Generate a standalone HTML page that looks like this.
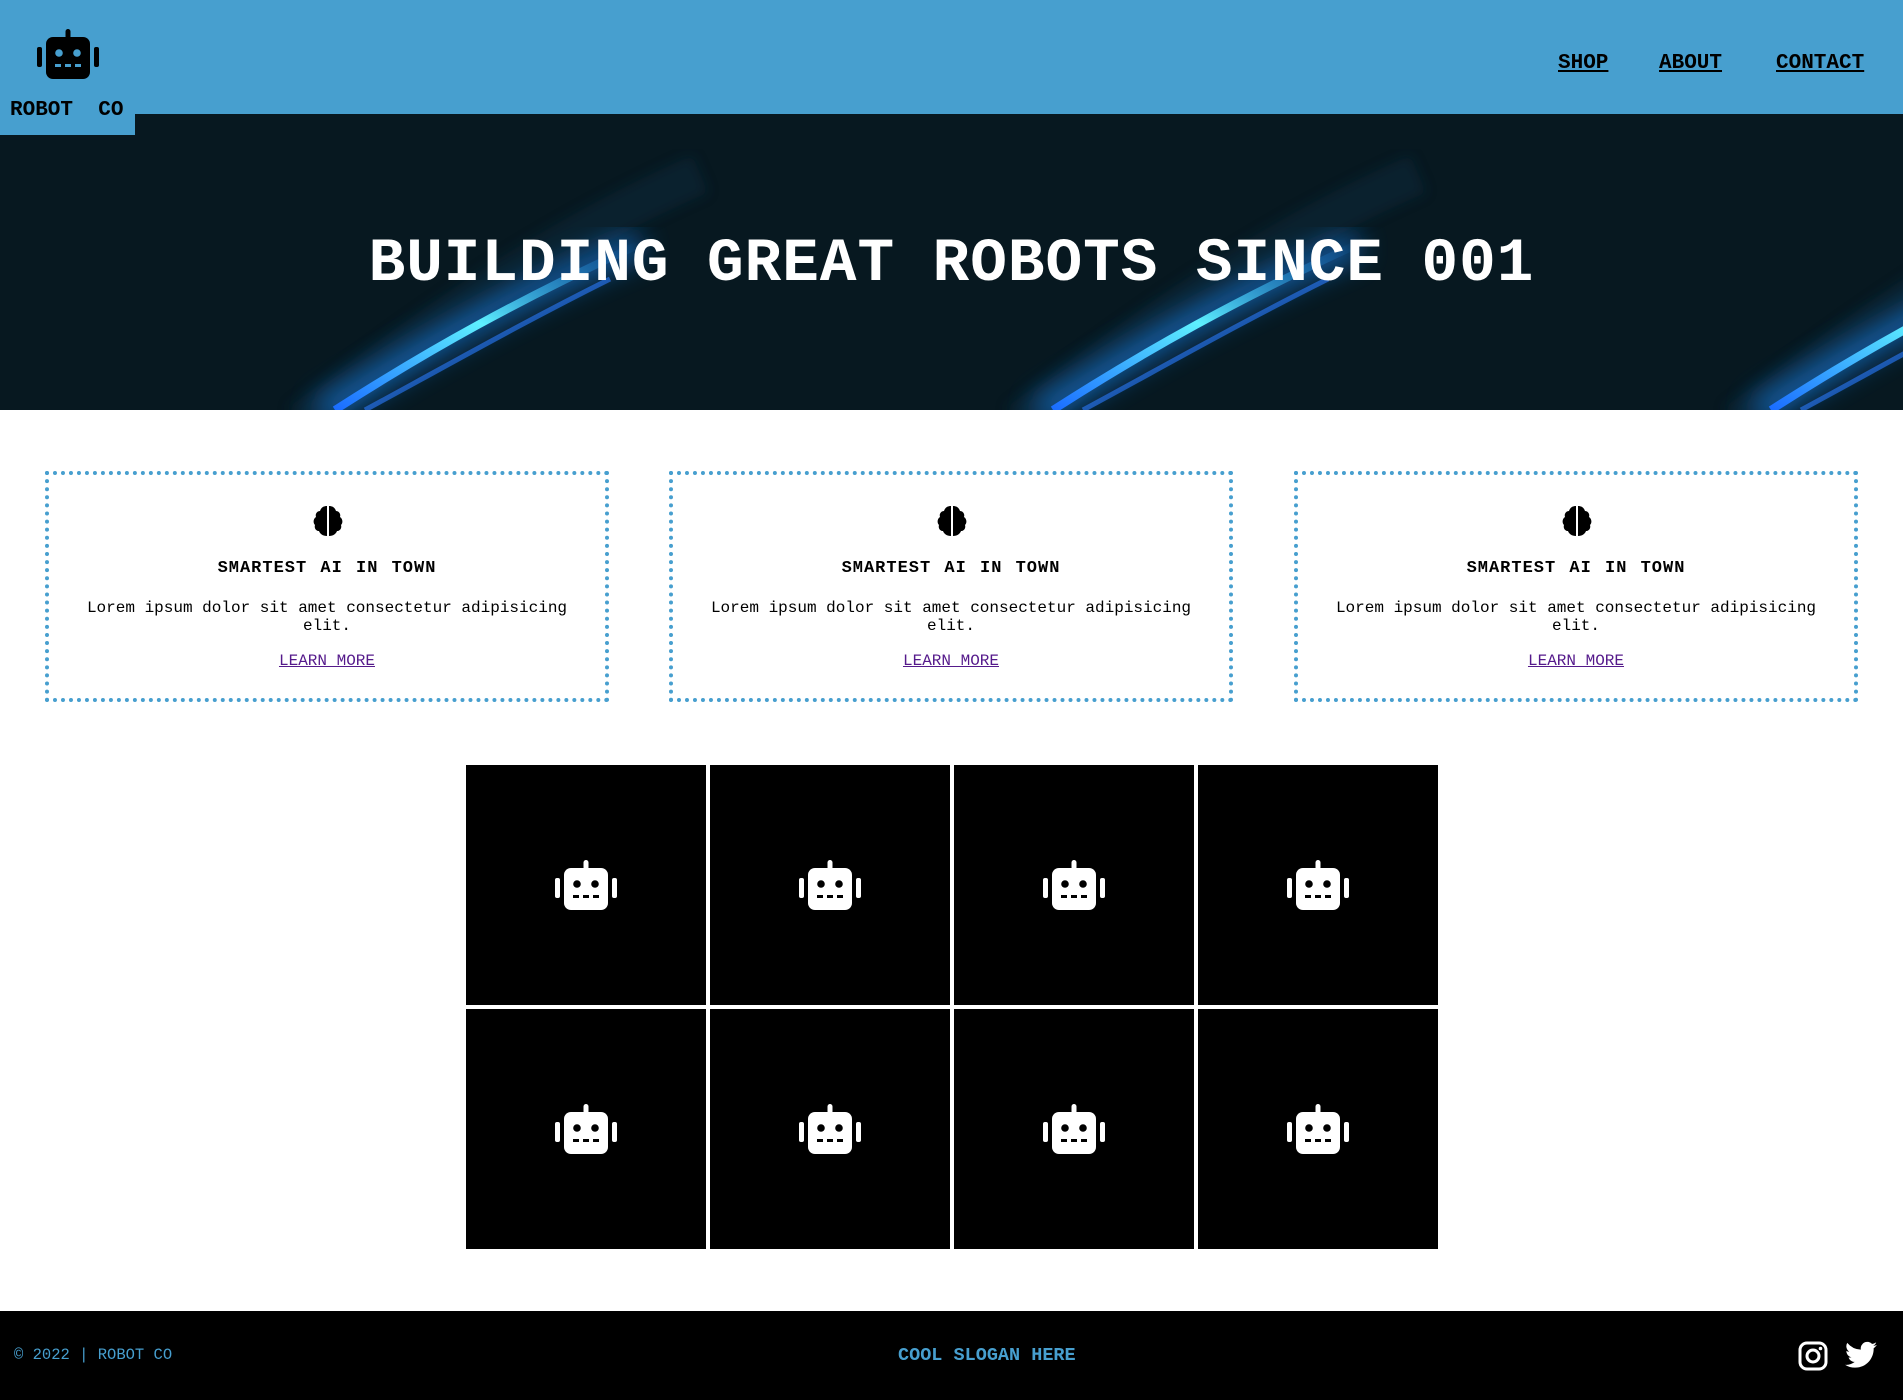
<!DOCTYPE html>
<html><head><meta charset="utf-8"><style>
*{margin:0;padding:0;box-sizing:border-box}
body{width:1903px;height:1400px;position:relative;background:#fff;font-family:"Liberation Mono","Courier New",monospace;overflow:hidden}
header{position:absolute;left:0;top:0;width:1903px;height:114px;background:#479fcf}
.logo{position:absolute;left:0;top:0;width:135px;height:135px;background:#479fcf;z-index:3}
.logo svg{position:absolute;left:37px;top:29px}
.logo span{position:absolute;left:10px;top:99px;font-weight:bold;font-size:21px;color:#000;white-space:pre}
nav a{position:absolute;top:52px;font-weight:bold;font-size:21px;color:#000;text-decoration:underline}
.hero{position:absolute;left:0;top:114px;width:1903px;height:296px;background:#071820;overflow:hidden}
.hero h1{position:absolute;left:0;width:1903px;top:116px;text-align:center;color:#fff;font-size:61px;font-weight:bold;line-height:70px;white-space:pre;letter-spacing:1px}
.card{position:absolute;top:471px;width:564px;height:231px;border:4px dotted #479fcf;text-align:center}
.card svg{position:absolute;left:262px;top:29px}
.card h3{position:absolute;top:84px;width:100%;font-size:17px;font-weight:bold;color:#000;letter-spacing:1px;word-spacing:2px}
.card p{position:absolute;top:124px;left:20px;right:20px;font-size:16px;line-height:18px;color:#000}
.card a{position:absolute;top:177px;left:0;width:100%;font-size:16px;color:#551a8b;text-decoration:underline}
.grid{position:absolute;left:466px;top:765px;width:972px}
.cell{position:absolute;width:240px;height:240px;background:#000}
.cell svg{position:absolute;left:89px;top:95px}
footer{position:absolute;left:0;top:1311px;width:1903px;height:89px;background:#000}
footer .l{position:absolute;left:14px;top:35px;font-size:15.5px;color:#479fcf;white-space:pre}
footer .c{position:absolute;left:898px;top:34px;font-size:18.5px;font-weight:bold;color:#479fcf;white-space:pre}
</style></head><body>
<svg width="0" height="0" style="position:absolute"><defs>
<symbol id="robot" viewBox="0 0 62 50">
<rect x="28.5" y="0" width="5" height="10" rx="2.5"/>
<rect x="9" y="8" width="44" height="42" rx="7"/>
<rect x="0" y="18" width="5" height="20" rx="2"/>
<rect x="57" y="18" width="5" height="20" rx="2"/>
</symbol>
</defs></svg>
<header></header>
<div class="logo">
<svg width="62" height="50" viewBox="0 0 62 50"><use href="#robot" fill="#000"/><circle cx="22" cy="24" r="3.8" fill="#479fcf"/><circle cx="40" cy="24" r="3.8" fill="#479fcf"/><rect x="18" y="35" width="6" height="3" fill="#479fcf"/><rect x="28" y="35" width="6" height="3" fill="#479fcf"/><rect x="38" y="35" width="6" height="3" fill="#479fcf"/></svg>
<span>ROBOT  CO</span></div>
<nav><a style="left:1558px">SHOP</a><a style="left:1659px">ABOUT</a><a style="left:1776px">CONTACT</a></nav>
<div class="hero">
<svg width="1903" height="296" style="position:absolute;left:0;top:0">
<defs>
<linearGradient id="g" x1="0" y1="1" x2="1" y2="0"><stop offset="0" stop-color="#1a6cff"/><stop offset="0.5" stop-color="#5ef0ff"/><stop offset="1" stop-color="#1a8cff" stop-opacity="0"/></linearGradient>
<filter id="bl"><feGaussianBlur stdDeviation="6"/></filter>
<filter id="bl2"><feGaussianBlur stdDeviation="14"/></filter>
<g id="st">
<path d="M300 310 C420 220 540 130 700 60" stroke="#0c2a3c" stroke-width="40" fill="none" opacity="0.5" filter="url(#bl)"/>
<path d="M320 300 C430 230 520 180 640 130" stroke="#1a8cff" stroke-width="22" fill="none" filter="url(#bl2)" opacity="0.7"/>
<path d="M335 296 C430 235 520 185 640 130" stroke="url(#g)" stroke-width="8" fill="none"/>
<path d="M365 296 C450 250 520 210 610 165" stroke="#2a7cff" stroke-width="5" fill="none" opacity="0.6"/>
</g></defs>
<use href="#st" x="0"/><use href="#st" x="718"/><use href="#st" x="1436"/>
</svg>
<h1>BUILDING GREAT ROBOTS SINCE 001</h1></div>

<div class="card" style="left:45px"><svg width="34" height="34" viewBox="0 0 34 34"><path d="M16 2c-4 0-6 2-7 5-3 0-5 3-4 6-3 2-3 6-1 8-1 3 1 6 4 6 1 3 4 5 8 5z M18 2c4 0 6 2 7 5 3 0 5 3 4 6 3 2 3 6 1 8 1 3-1 6-4 6-1 3-4 5-8 5z"/></svg><h3>SMARTEST AI IN TOWN</h3><p>Lorem ipsum dolor sit amet consectetur adipisicing elit.</p><a>LEARN MORE</a></div>
<div class="card" style="left:669px"><svg width="34" height="34" viewBox="0 0 34 34"><path d="M16 2c-4 0-6 2-7 5-3 0-5 3-4 6-3 2-3 6-1 8-1 3 1 6 4 6 1 3 4 5 8 5z M18 2c4 0 6 2 7 5 3 0 5 3 4 6 3 2 3 6 1 8 1 3-1 6-4 6-1 3-4 5-8 5z"/></svg><h3>SMARTEST AI IN TOWN</h3><p>Lorem ipsum dolor sit amet consectetur adipisicing elit.</p><a>LEARN MORE</a></div>
<div class="card" style="left:1294px"><svg width="34" height="34" viewBox="0 0 34 34"><path d="M16 2c-4 0-6 2-7 5-3 0-5 3-4 6-3 2-3 6-1 8-1 3 1 6 4 6 1 3 4 5 8 5z M18 2c4 0 6 2 7 5 3 0 5 3 4 6 3 2 3 6 1 8 1 3-1 6-4 6-1 3-4 5-8 5z"/></svg><h3>SMARTEST AI IN TOWN</h3><p>Lorem ipsum dolor sit amet consectetur adipisicing elit.</p><a>LEARN MORE</a></div>

<div class="grid">
<div class="cell" style="left:0;top:0"><svg width="62" height="50"><use href="#robot" fill="#fff"/><circle cx="22" cy="24" r="3.8"/><circle cx="40" cy="24" r="3.8"/><rect x="18" y="35" width="6" height="3"/><rect x="28" y="35" width="6" height="3"/><rect x="38" y="35" width="6" height="3"/></svg></div>
<div class="cell" style="left:244px;top:0"><svg width="62" height="50"><use href="#robot" fill="#fff"/><circle cx="22" cy="24" r="3.8"/><circle cx="40" cy="24" r="3.8"/><rect x="18" y="35" width="6" height="3"/><rect x="28" y="35" width="6" height="3"/><rect x="38" y="35" width="6" height="3"/></svg></div>
<div class="cell" style="left:488px;top:0"><svg width="62" height="50"><use href="#robot" fill="#fff"/><circle cx="22" cy="24" r="3.8"/><circle cx="40" cy="24" r="3.8"/><rect x="18" y="35" width="6" height="3"/><rect x="28" y="35" width="6" height="3"/><rect x="38" y="35" width="6" height="3"/></svg></div>
<div class="cell" style="left:732px;top:0"><svg width="62" height="50"><use href="#robot" fill="#fff"/><circle cx="22" cy="24" r="3.8"/><circle cx="40" cy="24" r="3.8"/><rect x="18" y="35" width="6" height="3"/><rect x="28" y="35" width="6" height="3"/><rect x="38" y="35" width="6" height="3"/></svg></div>
<div class="cell" style="left:0;top:244px"><svg width="62" height="50"><use href="#robot" fill="#fff"/><circle cx="22" cy="24" r="3.8"/><circle cx="40" cy="24" r="3.8"/><rect x="18" y="35" width="6" height="3"/><rect x="28" y="35" width="6" height="3"/><rect x="38" y="35" width="6" height="3"/></svg></div>
<div class="cell" style="left:244px;top:244px"><svg width="62" height="50"><use href="#robot" fill="#fff"/><circle cx="22" cy="24" r="3.8"/><circle cx="40" cy="24" r="3.8"/><rect x="18" y="35" width="6" height="3"/><rect x="28" y="35" width="6" height="3"/><rect x="38" y="35" width="6" height="3"/></svg></div>
<div class="cell" style="left:488px;top:244px"><svg width="62" height="50"><use href="#robot" fill="#fff"/><circle cx="22" cy="24" r="3.8"/><circle cx="40" cy="24" r="3.8"/><rect x="18" y="35" width="6" height="3"/><rect x="28" y="35" width="6" height="3"/><rect x="38" y="35" width="6" height="3"/></svg></div>
<div class="cell" style="left:732px;top:244px"><svg width="62" height="50"><use href="#robot" fill="#fff"/><circle cx="22" cy="24" r="3.8"/><circle cx="40" cy="24" r="3.8"/><rect x="18" y="35" width="6" height="3"/><rect x="28" y="35" width="6" height="3"/><rect x="38" y="35" width="6" height="3"/></svg></div>
</div>

<footer>
<div class="l">© 2022 | ROBOT CO</div>
<div class="c">COOL SLOGAN HERE</div>
<svg style="position:absolute;left:1798px;top:30px" width="30" height="30" viewBox="0 0 30 30"><rect x="2" y="2" width="26" height="26" rx="7" fill="none" stroke="#fff" stroke-width="3"/><circle cx="15" cy="15" r="6" fill="none" stroke="#fff" stroke-width="3"/><circle cx="22.5" cy="7.5" r="1.8" fill="#fff"/></svg>
<svg style="position:absolute;left:1845px;top:30px" width="32" height="28" viewBox="0 0 24 20"><path fill="#fff" d="M24 2.4c-.9.4-1.8.7-2.8.8 1-.6 1.8-1.6 2.2-2.7-1 .6-2 1-3.1 1.2A4.9 4.9 0 0 0 11.900 6 14 14 0 0 1 1.7.9a4.9 4.9 0 0 0 1.5 6.6c-.8 0-1.6-.2-2.2-.6 0 2.4 1.7 4.4 3.9 4.8-.7.2-1.5.2-2.2.1.6 2 2.4 3.4 4.6 3.4A9.9 9.9 0 0 1 0 17.3 14 14 0 0 0 7.5 19.5c9.100 0 14-7.5 14-14v-.6c1-.7 1.8-1.600 2.5-2.500z"/></svg>
</footer>
</body></html>
